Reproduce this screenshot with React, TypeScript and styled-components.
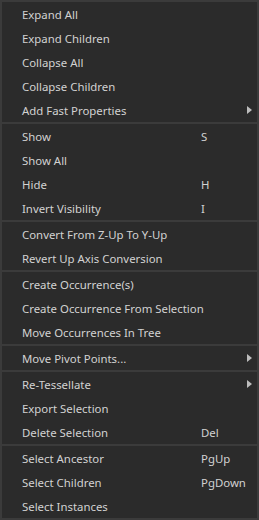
import styled, { createGlobalStyle } from "styled-components";

const GlobalStyle = createGlobalStyle`
  html, body {
    margin: 0;
    padding: 0;
    background: #2b2b2b;
  }
`;

type Item = { label: string; shortcut?: string; sub?: boolean };

const sections: Item[][] = [
  [
    { label: "Expand All" },
    { label: "Expand Children" },
    { label: "Collapse All" },
    { label: "Collapse Children" },
    { label: "Add Fast Properties", sub: true },
  ],
  [
    { label: "Show", shortcut: "S" },
    { label: "Show All" },
    { label: "Hide", shortcut: "H" },
    { label: "Invert Visibility", shortcut: "I" },
  ],
  [
    { label: "Convert From Z-Up To Y-Up" },
    { label: "Revert Up Axis Conversion" },
  ],
  [
    { label: "Create Occurrence(s)" },
    { label: "Create Occurrence From Selection" },
    { label: "Move Occurrences In Tree" },
  ],
  [{ label: "Move Pivot Points...", sub: true }],
  [
    { label: "Re-Tessellate", sub: true },
    { label: "Export Selection" },
    { label: "Delete Selection", shortcut: "Del" },
  ],
  [
    { label: "Select Ancestor", shortcut: "PgUp" },
    { label: "Select Children", shortcut: "PgDown" },
    { label: "Select Instances" },
  ],
];

const Menu = styled.div`
  width: 259px;
  height: 520px;
  box-sizing: border-box;
  background: #2b2b2b;
  border: 2px solid #3b3b3b;
  display: flex;
  flex-direction: column;
  font-family: "Noto Sans", "Open Sans", sans-serif;
  font-size: 11.4px;
  color: #d2d2d2;
  overflow: hidden;
`;

const Section = styled.div`
  display: flex;
  flex-direction: column;
  & + & {
    border-top: 2px solid #3b3b3b;
  }
`;

const Row = styled.div`
  height: 24px;
  display: grid;
  grid-template-columns: 179px 1fr 10px;
  align-items: center;
  padding-left: 20px;
  white-space: nowrap;
`;

const Label = styled.span``;

const Shortcut = styled.span``;

const Arrow = styled.span`
  width: 0;
  height: 0;
  border-top: 4px solid transparent;
  border-bottom: 4px solid transparent;
  border-left: 5px solid #bdbdbd;
`;

export default function App() {
  return (
    <>
      <GlobalStyle />
      <Menu>
        {sections.map((items, i) => (
          <Section key={i}>
            {items.map((it) => (
              <Row key={it.label}>
                <Label>{it.label}</Label>
                <Shortcut>{it.shortcut}</Shortcut>
                {it.sub ? <Arrow /> : <span />}
              </Row>
            ))}
          </Section>
        ))}
      </Menu>
    </>
  );
}
